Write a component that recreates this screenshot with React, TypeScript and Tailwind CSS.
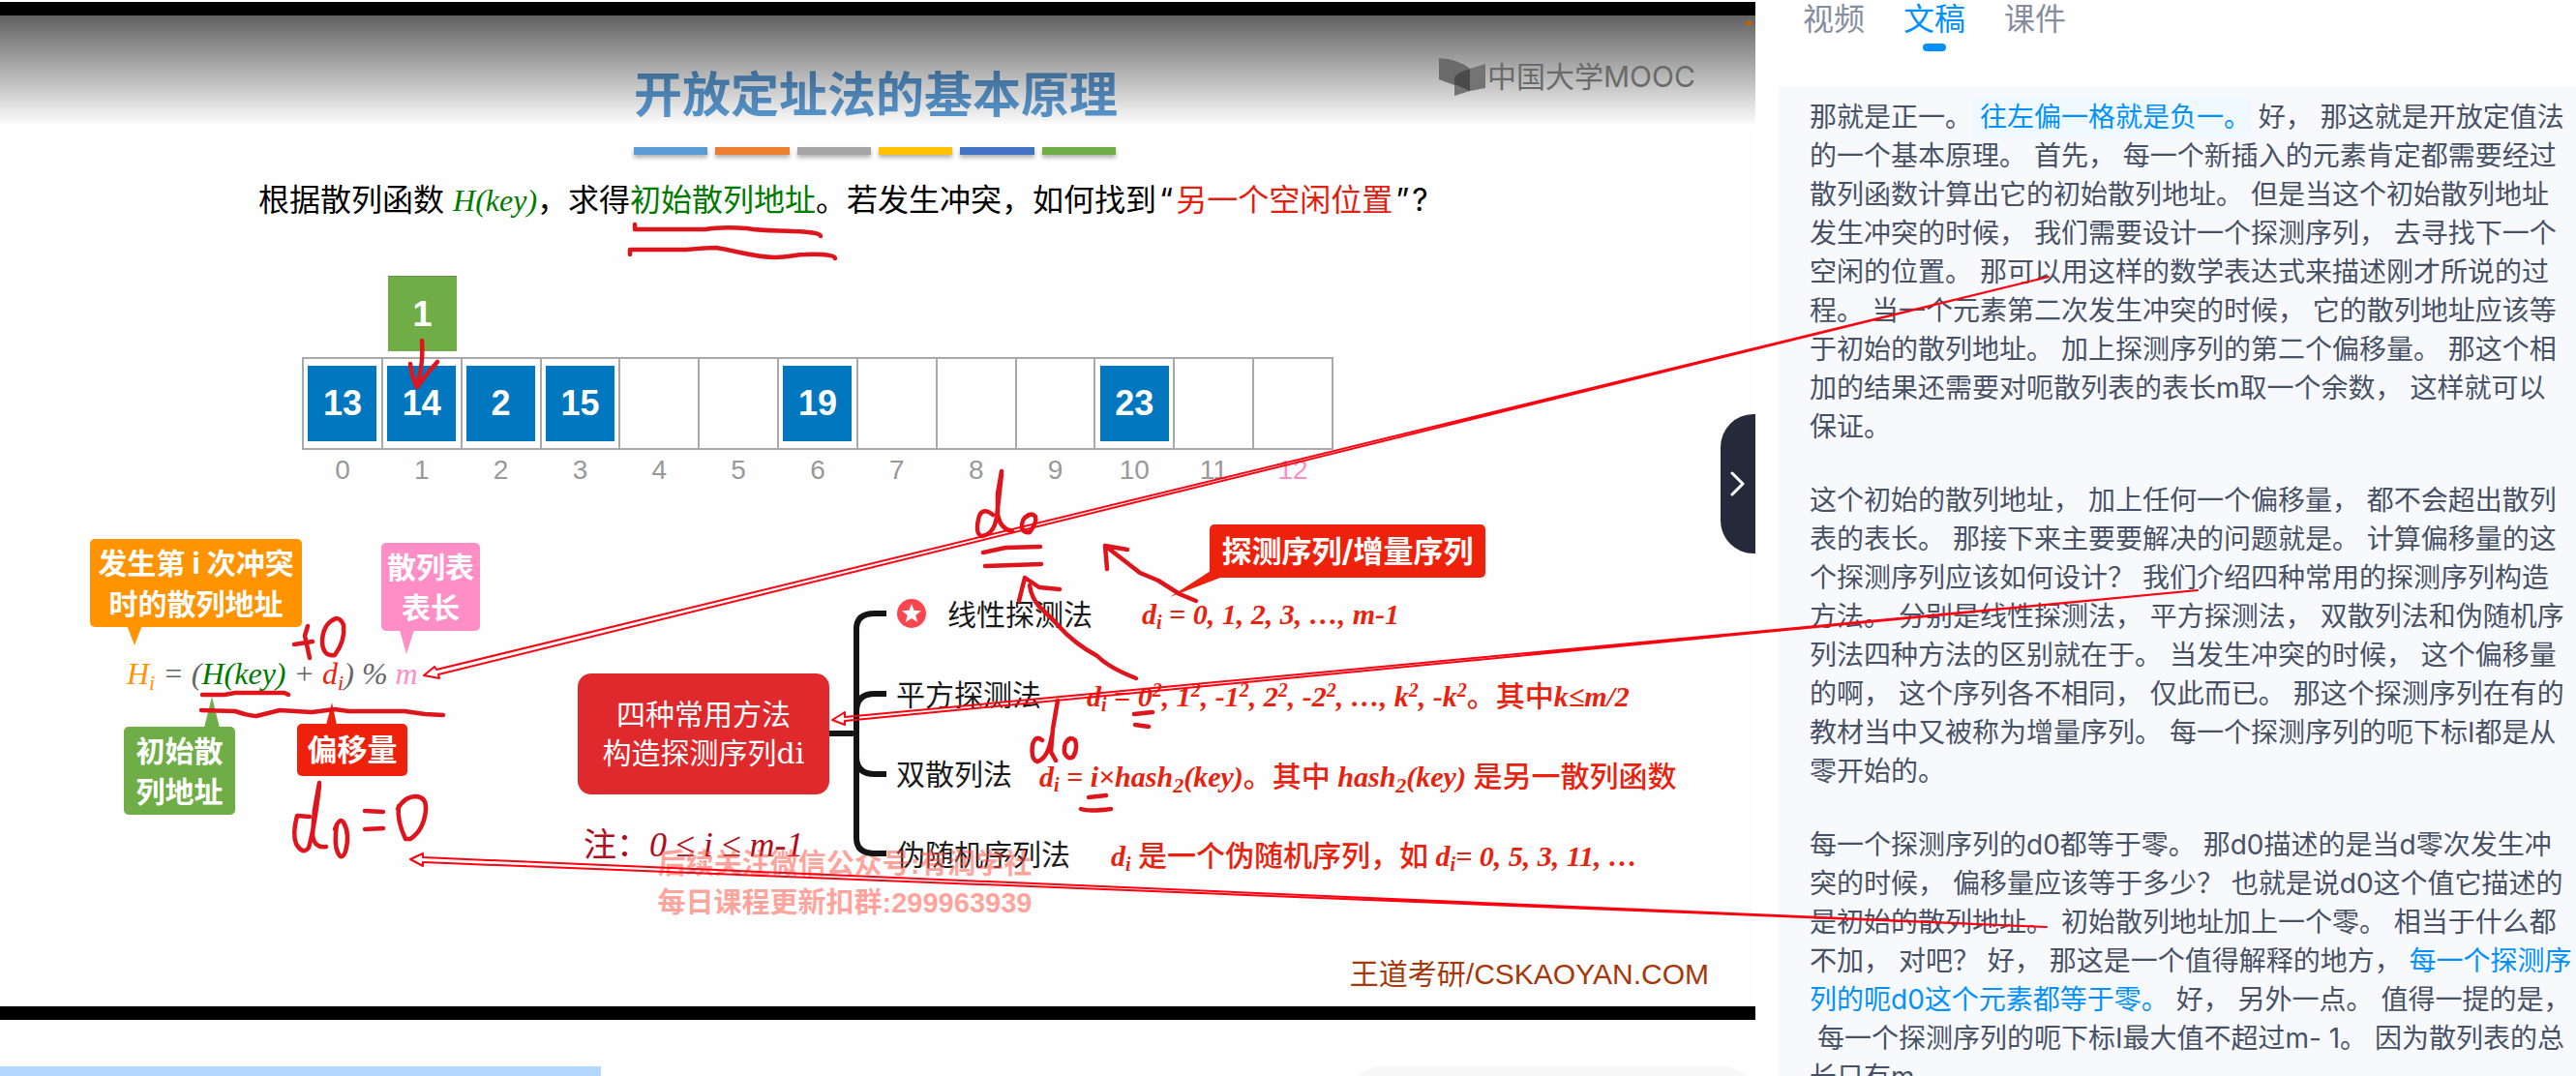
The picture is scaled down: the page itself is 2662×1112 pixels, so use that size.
import type { ReactNode } from 'react';

const BARS = ['bg-[#5b9bd5]', 'bg-[#ed7d31]', 'bg-[#a5a5a5]', 'bg-[#ffc000]', 'bg-[#4472c4]', 'bg-[#70ad47]'];

const SLOTS: (number | null)[] = [13, 14, 2, 15, null, null, 19, null, null, null, 23, null, null];

function Title() {
  return (
    <header className="ml-[655px] w-[498px]">
      <h1 className="whitespace-nowrap text-[50px] leading-[60px] font-bold text-[#5b9bd5]">开放定址法的基本原理</h1>
      <div className="mt-6 flex gap-2">
        {BARS.map((color) => (
          <span key={color} className={`h-2 flex-1 shadow-[0_3px_4px_rgba(0,0,0,0.3)] ${color}`} />
        ))}
      </div>
    </header>
  );
}

function HashTable() {
  return (
    <div className="ml-[312px]">
      <div className="ml-[89px] flex h-[78px] w-[71px] items-center justify-center border-t border-[#5f8f48] bg-[#70ad47] font-['Liberation_Sans'] text-[36px] font-bold text-white">
        1
      </div>
      <table className="mt-[6px] w-[1066px] table-fixed border-collapse font-['Liberation_Sans']">
        <tbody>
          <tr>
            {SLOTS.map((value, i) => (
              <td key={i} className="h-[94px] border-2 border-[#a9a9a9] p-0">
                {value !== null && (
                  <div className="mx-auto flex h-[78px] w-[71px] items-center justify-center bg-[#0077be] text-[36px] font-bold text-white">
                    {value}
                  </div>
                )}
              </td>
            ))}
          </tr>
          <tr>
            {SLOTS.map((_, i) => (
              <td
                key={i}
                className={`h-[42px] p-0 text-center text-[28px] leading-[42px] ${i === 12 ? 'text-[#ff8ec6]' : 'text-[#999999]'}`}
              >
                {i}
              </td>
            ))}
          </tr>
        </tbody>
      </table>
    </div>
  );
}

function Callout({ className, children }: { className: string; children: ReactNode }) {
  return (
    <div
      className={`absolute flex flex-col items-center justify-center rounded-[5px] whitespace-nowrap text-center leading-[42px] font-bold text-white ${className}`}
    >
      {children}
    </div>
  );
}

function AddressFormula() {
  return (
    <>
      <Callout className="top-[541px] left-[93px] h-[91px] w-[219px] bg-[#ff9300] text-[30px]">
        <span>发生第 i 次冲突</span>
        <span>时的散列地址</span>
      </Callout>
      <Callout className="top-[545px] left-[394px] h-[91px] w-[102px] bg-[#ff8ec6] text-[30px]">
        <span>散列表</span>
        <span>表长</span>
      </Callout>
      <Callout className="top-[735px] left-[128px] h-[91px] w-[115px] bg-[#6fae46] text-[30px]">
        <span>初始散</span>
        <span>列地址</span>
      </Callout>
      <Callout className="top-[732px] left-[307px] h-[54px] w-[114px] bg-[#ee220c] text-[31px]">
        <span>偏移量</span>
      </Callout>
      <Callout className="top-[526px] left-[1250px] h-[55px] w-[285px] bg-[#ee220c] text-[31px]">
        <span>探测序列/增量序列</span>
      </Callout>
      <p className="absolute top-[660px] left-[131px] whitespace-nowrap font-['Liberation_Serif'] text-[32px] leading-[40px] text-[#666666] italic">
        <span className="text-[#ff9300]">
          H<sub className="text-[22px]">i</sub>
        </span>{' '}
        = (<span className="text-[#007a00]">H(key)</span> +{' '}
        <span className="text-[#ee220c]">
          d<sub className="text-[22px]">i</sub>
        </span>
        ) % <span className="text-[#ff8ec6]">m</span>
      </p>
    </>
  );
}

function Method({ className, children }: { className: string; children: ReactNode }) {
  return <p className={`absolute whitespace-nowrap text-[30px] leading-[40px] text-[#1a1a1a] ${className}`}>{children}</p>;
}

function Formula({ className, children }: { className: string; children: ReactNode }) {
  return (
    <p
      className={`absolute whitespace-nowrap font-['Liberation_Serif','Noto_Sans_CJK_SC',serif] text-[30px] leading-[40px] font-bold text-[#e8220e] italic ${className}`}
    >
      {children}
    </p>
  );
}

const Hz = ({ children }: { children: ReactNode }) => <span className="font-medium not-italic">{children}</span>;
const Di = () => (
  <>
    d<sub className="text-[20px]">i</sub>
  </>
);
const Sq = () => <sup className="text-[20px]">2</sup>;
const Two = () => <sub className="text-[22px]">2</sub>;

function MethodMap() {
  return (
    <>
      <div className="absolute top-[680px] left-[597px] flex h-[125px] w-[260px] flex-col items-center justify-center rounded-[14px] bg-[#e0292c] text-[30px] leading-[40px] text-white">
        <span>四种常用方法</span>
        <span>
          构造探测序列<span className="font-['DejaVu_Serif']">di</span>
        </span>
      </div>
      <Method className="top-[599px] left-[979px]">线性探测法</Method>
      <Method className="top-[682px] left-[926px]">平方探测法</Method>
      <Method className="top-[764px] left-[926px]">双散列法</Method>
      <Method className="top-[847px] left-[926px]">伪随机序列法</Method>

      <Formula className="top-[599px] left-[1180px]">
        <Di /> = 0, 1, 2, 3, …, m-1
      </Formula>
      <Formula className="top-[684px] left-[1123px]">
        <Di /> = 0<Sq />, 1<Sq />, -1<Sq />, 2<Sq />, -2<Sq />, …, k<Sq />, -k<Sq />
        <Hz>。其中</Hz>k≤m/2
      </Formula>
      <Formula className="top-[767px] left-[1074px]">
        <Di /> = i×hash<Two />(key)<Hz>。其中</Hz> hash<Two />(key) <Hz>是另一散列函数</Hz>
      </Formula>
      <Formula className="top-[849px] left-[1148px]">
        <Di /> <Hz>是一个伪随机序列，如</Hz> <Di />= 0, 5, 3, 11, …
      </Formula>

      <p className="absolute top-[837px] left-[603px] whitespace-nowrap font-['Liberation_Serif','Noto_Sans_CJK_SC',serif] text-[34px] leading-[40px] text-[#b00d20]">
        注：<i className="text-[36px]">0 ≤ i ≤ m-1</i>
      </p>
      <p className="absolute top-[857px] left-[677px] w-[392px] whitespace-nowrap text-center font-['Liberation_Sans','Noto_Sans_CJK_SC',sans-serif] text-[29px] leading-[40px] font-bold text-[#ff4a3c]/50">
        后续关注微信公众号:有润学社
        <br />
        每日课程更新扣群:299963939
      </p>
    </>
  );
}

/* Callout tails, mind-map branches and pen strokes of the lecturer. */
function SlideInk() {
  return (
    <svg className="pointer-events-none absolute top-[-16px] left-0" width="1814" height="1056" viewBox="0 0 1814 1056" fill="none">
      <path d="M131 646H147L139 667Z" fill="#ff9300" />
      <path d="M413 651H428L420 676Z" fill="#ff8ec6" />
      <path d="M211 752H227L219 720Z" fill="#6fae46" />
      <path d="M337 749H348L343 726Z" fill="#ee220c" />
      <path d="M1251 590L1261 597L1209 617Z" fill="#ee220c" />

      <g stroke="#141414" strokeWidth="6">
        <path d="M857 758H885" />
        <path d="M916 634H904Q885 634 885 650V866Q885 882 904 882H916" />
        <path d="M885 735Q885 717 904 717H916M885 782Q885 800 904 800H916" />
      </g>

      <circle cx="942" cy="634" r="15" fill="#fb4650" />
      <path
        d="M942 624L944.6 630.8L952 631.2L946.3 635.8L948.2 643L942 639L935.8 643L937.7 635.8L932 631.2L939.4 630.8Z"
        fill="#fff"
      />

      <g stroke="#df151d" strokeWidth="4.5" strokeLinecap="round" strokeLinejoin="round">
        <path d="M656 232V237H729C740 235 755 235 772 236C790 239 805 238 821 239Q848 240 848 244" />
        <path d="M651 263V258H709Q732 256 740 256C760 259 780 266 801 266C815 266 822 263 832 263Q862 262 863 267" />
        <path d="M436 352Q437 368 435 380L431 400M424 376L426 388L430 399M452 374L444 383L431 400" />

        <path d="M1035 487L1031 510V532Q1034 547 1046 549M1026 532Q1016 524 1012 533Q1007 551 1014 554Q1027 553 1030 534L1035 490" />
        <path d="M1063 532Q1055 536 1056 546Q1058 551 1064 550Q1072 540 1070 534Q1066 529 1061 534" />
        <path d="M1016 571L1039 566L1075 565M1018 585L1076 583" />
        <path d="M1165 568L1142 564L1144 588M1142 564L1178 592L1197 600L1219 614L1236 621" />
        <path d="M1053 621L1059 597L1074 607L1095 609M1064 605Q1066 618 1074 627Q1088 640 1094 647Q1110 665 1134 678Q1146 690 1174 701" />

        <path d="M1093 724L1088 753L1086 777L1091 786M1077 765Q1070 759 1067 770Q1065 785 1072 787Q1083 784 1087 760" />
        <path d="M1106 763Q1099 766 1100 778Q1104 786 1109 782Q1114 774 1111 765Q1106 761 1103 766" />
        <path d="M1172 738L1191 736M1173 749L1187 751M1125 824L1143 822M1117 836Q1125 839 1148 836" />

        <path d="M304 666L323 663M318 647L315 657L320 680" />
        <path d="M347 639Q333 645 333 664Q334 679 346 677Q357 662 355 646Q351 636 344 641" />
        <path d="M209 718H232L243 716H294L298 718" />
        <path d="M208 734L243 735Q258 740 265 740L289 734L322 736L346 733L360 735H418L439 738L458 739" />

        <path d="M330 809L325 837L323 863Q325 877 337 875M320 844L307 843Q302 862 306 872Q313 884 319 876Q325 855 330 812" />
        <path d="M346 857Q351 844 355 850Q362 862 357 880Q353 890 349 881Q345 872 348 852" />
        <path d="M377 838L396 839M377 857L396 856" />
        <path d="M411 836Q418 823 430 823Q441 824 440 837Q438 858 424 867H419Q410 848 412 833" />
      </g>
    </svg>
  );
}

function MoocLogo() {
  return (
    <div className="absolute top-[42px] left-[1487px] flex items-center text-[#6a6a6a]">
      <svg width="50" height="42" viewBox="0 0 50 42">
        <path d="M0 2Q20 3 32 13Q17 18 16 28V30L0 24Z" fill="#6b6b6b" />
        <path d="M32 13L48 8V33L32 36L16 41V26Q18 17 32 13Z" fill="#747474" />
        <path d="M32 13V36L16 29V22Q20 16 32 13Z" fill="#4a4a4a" />
      </svg>
      <span className="whitespace-nowrap text-[30px] leading-[40px]">中国大学MOOC</span>
    </div>
  );
}

function Player() {
  return (
    <main className="flex min-w-0 flex-col">
      <section className="relative mt-[2px] border-y-[14px] border-black bg-[#fefefe]">
        <div className="relative h-[1024px] overflow-hidden pt-[52px]">
          <Title />
          <p className="mt-[27px] ml-[267px] whitespace-nowrap text-[32px] leading-[40px] text-black">
            根据散列函数 <i className="font-['Liberation_Serif'] text-[#007a00]">H(key)</i>，求得
            <span className="text-[#007a00]">初始散列地址</span>。若发生冲突，如何找到
            <span className="px-[3px]">“</span>
            <span className="text-[#e3200f]">另一个空闲位置</span>
            <span className="px-[3px]">”</span>?
          </p>
          <div className="mt-[58px]">
            <HashTable />
          </div>
          <AddressFormula />
          <MethodMap />
          <p className="absolute right-[48px] bottom-[13px] whitespace-nowrap font-['Liberation_Sans','Noto_Sans_CJK_SC',sans-serif] text-[30px] leading-[40px] text-[#a5390b]">
            王道考研/CSKAOYAN.COM
          </p>
          <SlideInk />
          <div className="absolute inset-x-0 top-0 h-[114px] bg-linear-to-b from-black/62 to-black/0" />
          <MoocLogo />
          <span className="absolute top-[5px] right-1 size-[6px] rounded-full bg-[#b5660f]" />
        </div>
        <button
          type="button"
          aria-label="收起侧栏"
          className="absolute top-[412px] right-0 flex h-[144px] w-9 items-center justify-center rounded-l-[34px] bg-[#252a3a]"
        >
          <svg width="16" height="28" viewBox="0 0 16 28" fill="none" stroke="#fff" strokeWidth="3" strokeLinecap="round" strokeLinejoin="round">
            <path d="M2 3L13 14L2 25" />
          </svg>
        </button>
      </section>
      <footer className="mt-[48px] flex items-start justify-between">
        <div className="h-[68px] w-[621px] bg-[#b3d7ff]" />
        <div className="h-[68px] w-[420px] rounded-full bg-[#f7f7f7]" />
      </footer>
    </main>
  );
}

const TABS = ['视频', '文稿', '课件'];

function Transcript() {
  return (
    <aside className="flex min-w-0 flex-col pl-6">
      <nav className="flex h-[90px] shrink-0 gap-10 pl-[25px]">
        {TABS.map((tab) => {
          const active = tab === '文稿';
          return (
            <button
              key={tab}
              type="button"
              className={`flex h-[53px] flex-col items-center justify-between whitespace-nowrap text-[32px] leading-[40px] ${active ? 'text-[#0091ff]' : 'text-[#858e9e]'}`}
            >
              {tab}
              {active && <span className="h-2 w-6 rounded-full bg-[#0091ff]" />}
            </button>
          );
        })}
      </nav>
      <div className="flex flex-1 flex-col gap-9 bg-[#f8f9fd] pt-[11px] pl-8 text-[28px] leading-[40px] whitespace-pre-wrap text-[#475266]">
        <p>
          {'那就是正一。'}
          <span className="bg-[#f0f9ff] py-1 text-[#0091ff]">{' 往左偏一格就是负一。'}</span>
          {
            ' 好， 那这就是开放定值法\n的一个基本原理。 首先， 每一个新插入的元素肯定都需要经过\n散列函数计算出它的初始散列地址。 但是当这个初始散列地址\n发生冲突的时候， 我们需要设计一个探测序列， 去寻找下一个\n空闲的位置。 那可以用这样的数学表达式来描述刚才所说的过\n程。 当一个元素第二次发生冲突的时候， 它的散列地址应该等\n于初始的散列地址。 加上探测序列的第二个偏移量。 那这个相\n加的结果还需要对呃散列表的表长m取一个余数， 这样就可以\n保证。'
          }
        </p>
        <p>
          {
            '这个初始的散列地址， 加上任何一个偏移量， 都不会超出散列\n表的表长。 那接下来主要要解决的问题就是。 计算偏移量的这\n个探测序列应该如何设计？ 我们介绍四种常用的探测序列构造\n方法。 分别是线性探测法， 平方探测法， 双散列法和伪随机序\n列法四种方法的区别就在于。 当发生冲突的时候， 这个偏移量\n的啊， 这个序列各不相同， 仅此而已。 那这个探测序列在有的\n教材当中又被称为增量序列。 每一个探测序列的呃下标I都是从\n零开始的。'
          }
        </p>
        <p>
          {
            '每一个探测序列的d0都等于零。 那d0描述的是当d零次发生冲\n突的时候， 偏移量应该等于多少？ 也就是说d0这个值它描述的\n是初始的散列地址。 初始散列地址加上一个零。 相当于什么都\n不加， 对吧？ 好， 那这是一个值得解释的地方，'
          }
          <span className="text-[#0091ff]">{' 每一个探测序\n列的呃d0这个元素都等于零。'}</span>
          {' 好， 另外一点。 值得一提的是，\n 每一个探测序列的呃下标I最大值不超过m- 1。 因为散列表的总\n长只有m。'}
        </p>
      </div>
    </aside>
  );
}

/* Hollow arrows that link transcript sentences to spots on the slide. */
function LinkArrows() {
  return (
    <svg
      className="pointer-events-none absolute top-0 left-0"
      width="2662"
      height="1112"
      viewBox="0 0 2662 1112"
      fill="none"
      stroke="#ff0010"
      strokeWidth="2"
      strokeLinejoin="round"
    >
      <path d="M438 698L449 689L451 692L2117 286L453 697L454 701Z" />
      <path d="M860 744L873 736V741L2271 610L873 745V749Z" />
      <path d="M424 888L437 882V886L2115 958L437 891V895Z" />
    </svg>
  );
}

export default function App() {
  return (
    <div className="relative grid h-screen grid-cols-[1814fr_848fr] grid-rows-[100%] overflow-hidden bg-white font-['Inter','Noto_Sans_CJK_SC',sans-serif]">
      <Player />
      <Transcript />
      <LinkArrows />
    </div>
  );
}
